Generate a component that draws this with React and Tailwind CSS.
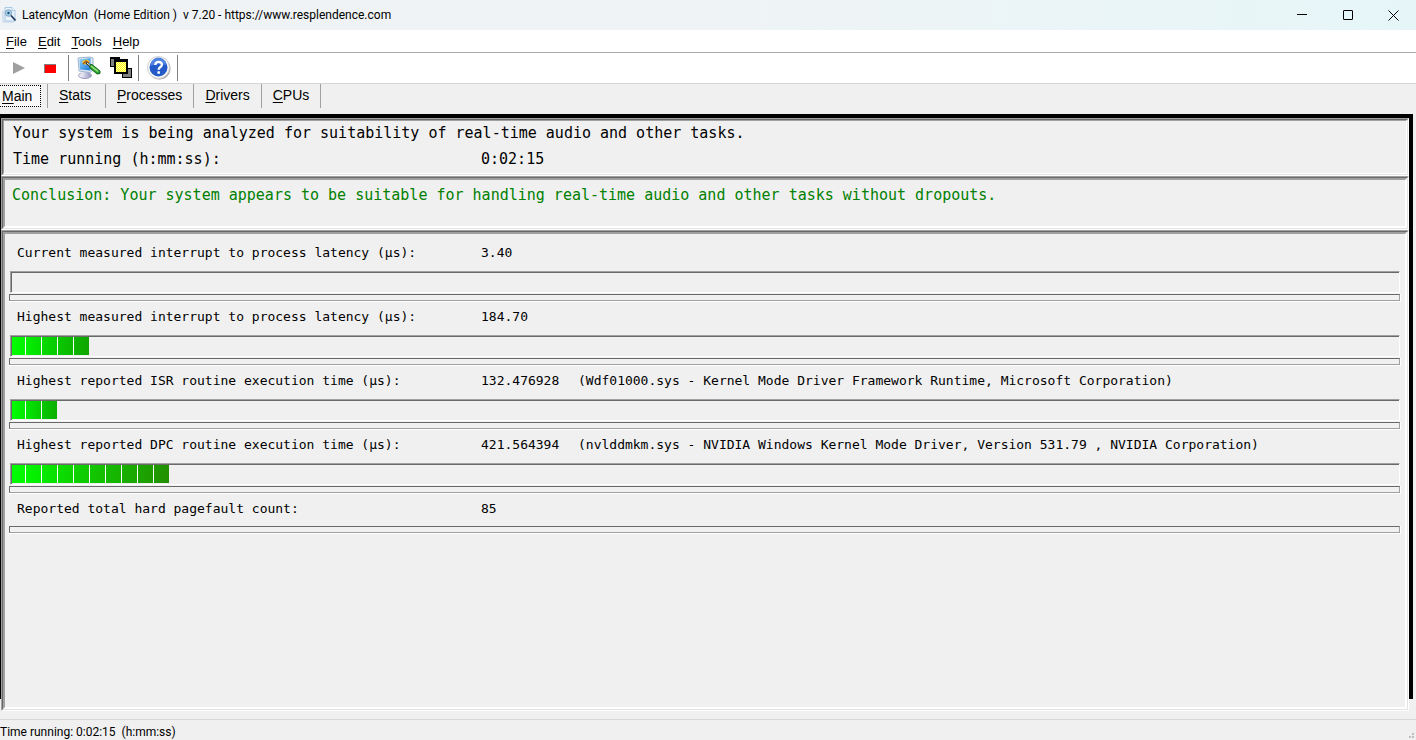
import React from "react";

const menus = ["File", "Edit", "Tools", "Help"];
const tabs = ["Main", "Stats", "Processes", "Drivers", "CPUs"];

const measurements = [
  {
    label: "Current measured interrupt to process latency (µs):",
    value: "3.40",
    segments: 0,
  },
  {
    label: "Highest measured interrupt to process latency (µs):",
    value: "184.70",
    segments: 5,
    endColor: "#10a400",
  },
  {
    label: "Highest reported ISR routine execution time (µs):",
    value: "132.476928",
    detail:
      "(Wdf01000.sys - Kernel Mode Driver Framework Runtime, Microsoft Corporation)",
    segments: 3,
    endColor: "#0aae00",
  },
  {
    label: "Highest reported DPC routine execution time (µs):",
    value: "421.564394",
    detail:
      "(nvlddmkm.sys - NVIDIA Windows Kernel Mode Driver, Version 531.79 , NVIDIA Corporation)",
    segments: 10,
    endColor: "#229000",
  },
];

// First letter is the keyboard accelerator
const Accel = ({ text }) => (
  <span>
    <span className="underline underline-offset-2">{text[0]}</span>
    {text.slice(1)}
  </span>
);

const AppIcon = () => (
  <svg width="15" height="16" viewBox="0 0 15 16">
    <path d="M3 .5h7l3 3V14H3z" fill="#e9f3fb" stroke="#a9c9e2" />
    <path d="M10 .5v3h3" fill="#fff" stroke="#a9c9e2" />
    <path d="M1 3.500V15h11" fill="none" stroke="#b8d3e8" />
    <circle cx="6.500" cy="6" r="3.300" fill="#9ed0ee" stroke="#8ea6bb" />
    <circle cx="6.500" cy="6" r="1.200" fill="#27516f" />
    <path d="m9 8.500 4.500 5" stroke="#233a63" strokeWidth="1.800" />
  </svg>
);

const PlayIcon = () => (
  <svg width="12" height="12" viewBox="0 0 12 12">
    <path d="M0 0v12L12 6z" fill="#a0a0a0" />
  </svg>
);

const StopIcon = () => (
  <svg width="12" height="9" viewBox="0 0 12 9">
    <path d="M0 0h12v9H0z" fill="#808080" />
    <path d="M1 1h11v8H1z" fill="#f00" />
  </svg>
);

const MonitorIcon = () => (
  <svg width="24" height="24" viewBox="0 0 24 24">
    <defs>
      <linearGradient id="screen" x1="0" y1="0" x2="1" y2="1">
        <stop offset="0" stopColor="#8fd4ff" />
        <stop offset="1" stopColor="#1877d8" />
      </linearGradient>
      <linearGradient id="base" x1="0" y1="0" x2="1" y2="0">
        <stop offset="0" stopColor="#f4f4fb" />
        <stop offset="1" stopColor="#9a9cc4" />
      </linearGradient>
    </defs>
    <ellipse cx="8" cy="19.500" rx="6.500" ry="3" fill="url(#base)" stroke="#9a9cbc" />
    <path d="m4 14 8 1 1 5-8 1z" fill="url(#base)" />
    <path d="m1 2 12-1 3 1v12l-3 2.500L2 15z" fill="#dce8f4" stroke="#9db4cf" />
    <path d="m2.500 3.500 11-1.500v12.500L3 13.500z" fill="url(#screen)" />
    <path d="m5 5 5-1.500 3 2L11 9 6 8z" fill="#f2c332" />
    <path d="m6 8 3-3 3 2" fill="none" stroke="#a35a18" strokeWidth="1.200" />
    <path d="m12 9 3-.5 8 6.500v2.500l-3 .500-7-6z" fill="#2f9e35" stroke="#146b1c" />
    <path d="m14 10 7 5.500" stroke="#9bea83" strokeWidth="1.500" />
    <path d="m9 6.500 4 3.500" stroke="#30343a" strokeWidth="2" />
    <path d="m10 7 3 2.500" stroke="#eceff2" />
  </svg>
);

const CascadeIcon = () => (
  <svg width="22" height="22" viewBox="0 0 22 22" shapeRendering="crispEdges">
    <defs>
      <pattern id="dither" width="2" height="2" patternUnits="userSpaceOnUse">
        <path d="M0 0h2v2H0z" fill="#ff0" />
        <path d="M0 0h1v1H0zM1 1h1v1H1z" fill="#fffbb0" />
      </pattern>
    </defs>
    <path d="M0 0h10v10H0zM12 11h10v10H12z" fill="#000" />
    <path d="M1 2h8v7H1zM13 12h8v8h-8z" fill="#808080" />
    <path d="M4 2h14v15H4z" fill="#000" />
    <path d="M6 5h10v10H6z" fill="url(#dither)" />
  </svg>
);

const HelpIcon = () => (
  <svg width="24" height="24" viewBox="0 0 24 24">
    <circle cx="12.500" cy="12.500" r="11" fill="#a5a5a5" />
    <circle cx="11.500" cy="11.500" r="11" fill="#f8f8f8" stroke="#cfcfcf" />
    <circle cx="11.500" cy="11.500" r="9" fill="#2459c8" />
    <path d="M3.500 10a8 8 0 0 1 16-1c-5-1-11-1-16 1z" fill="#4f83e2" />
    <path
      d="M8.300 9c0-4.200 6.600-4.200 6.600-.3 0 2.300-3.300 2.300-3.300 5"
      fill="none"
      stroke="#fff"
      strokeWidth="2.300"
    />
    <path d="M10.400 15.300h2.500v2.500h-2.500z" fill="#fff" />
  </svg>
);

const TitleBar = () => (
  <header className="flex h-[30px] items-center bg-linear-to-r from-[#f0f3f6] via-[#eff3f5] to-[#e6f6f8] pl-0.5 font-[Roboto,sans-serif] text-[12px]">
    <AppIcon />
    <h1 className="ml-[5px] whitespace-pre">
      {"LatencyMon  (Home Edition )  v 7.20 - https://www.resplendence.com"}
    </h1>
    <div className="ml-auto flex h-full">
      <button aria-label="Minimize" className="grid w-[45px] place-items-center">
        <svg width="11" height="11" viewBox="0 0 11 11">
          <path d="M0 4.500h10" stroke="#000" />
        </svg>
      </button>
      <button aria-label="Maximize" className="grid w-[46px] place-items-center">
        <svg width="11" height="11" viewBox="0 0 11 11">
          <rect x=".5" y=".5" width="9" height="9" rx=".5" fill="none" stroke="#000" />
        </svg>
      </button>
      <button aria-label="Close" className="grid w-[45px] place-items-center">
        <svg width="11" height="11" viewBox="0 0 11 11">
          <path d="m.5.5 10 10m0-10-10 10" stroke="#000" />
        </svg>
      </button>
    </div>
  </header>
);

const MenuBar = () => (
  <nav className="flex h-[23px] items-center gap-[11px] border-b border-[#a9a9a9] bg-white pt-0.5 pl-1.5 text-[13px]">
    {menus.map((menu) => (
      <button key={menu}>
        <Accel text={menu} />
      </button>
    ))}
  </nav>
);

const Divider = () => <div className="h-[26px] w-px bg-[#808080]" />;

const Toolbar = () => (
  <div className="flex h-[31px] items-center border-b border-[#d6d6d6] bg-white pl-[13px]">
    <button aria-label="Start monitor">
      <PlayIcon />
    </button>
    <button aria-label="Stop monitor" className="mr-3 ml-[19px]">
      <StopIcon />
    </button>
    <Divider />
    <div className="flex items-center gap-[9px] pr-1.5 pl-2">
      <button aria-label="Options">
        <MonitorIcon />
      </button>
      <button aria-label="Windows">
        <CascadeIcon />
      </button>
    </div>
    <Divider />
    <button aria-label="Help" className="mr-1.5 ml-2">
      <HelpIcon />
    </button>
    <Divider />
  </div>
);

const TabBar = () => (
  <div role="tablist" className="flex h-[30px] items-start text-[14px]">
    {tabs.map((tab, i) =>
      i === 0 ? (
        <div key={tab} className="h-6 w-12 border-r border-[#a0a0a0]">
          <button
            role="tab"
            aria-selected="true"
            className="mt-px h-[22px] w-[41px] border border-l-0 border-dotted border-black bg-[#f8f8f8] pl-0.5 text-left leading-5"
          >
            <Accel text={tab} />
          </button>
        </div>
      ) : (
        <button
          key={tab}
          role="tab"
          aria-selected="false"
          className="h-6 min-w-[58px] border-r border-[#a0a0a0] px-[11px] pb-0.5 text-left"
        >
          <Accel text={tab} />
        </button>
      )
    )}
  </div>
);

// Three nested edges give the sunken Win32 frame
const Panel = ({ thick, className = "", children }) => (
  <section
    className={`flex flex-col border border-t-[#a0a0a0] border-r-white border-b-white border-l-[#a0a0a0] bg-[#f0f0f0] ${className}`}
  >
    <div className="flex grow flex-col border border-t-[#696969] border-r-[#e3e3e3] border-b-[#e3e3e3] border-l-[#696969]">
      <div
        className={`grow border-t-[#a0a0a0] border-r-white border-b-white border-l-[#a0a0a0] ${
          thick ? "border-2" : "border"
        }`}
      >
        {children}
      </div>
    </div>
  </section>
);

const Separator = () => (
  <div className="border-r border-b border-white">
    <div className="h-[7px] border border-t-[#696969] border-r-[#a0a0a0] border-b-[#a0a0a0] border-l-[#696969]" />
  </div>
);

const Bar = ({ segments, endColor }) => (
  <div className="mx-px mt-[5px] mb-px border border-t-[#a0a0a0] border-r-white border-b-white border-l-[#a0a0a0]">
    <div className="h-5 border-t border-l border-[#696969]">
      {segments > 0 && (
        <div
          className="flex h-[18px] w-fit"
          style={{ background: `linear-gradient(to right, #00ff00, ${endColor})` }}
        >
          {Array.from({ length: segments }, (_, i) => (
            <div
              key={i}
              className="w-4 border-r border-white first:w-3.5 last:w-[15px] last:border-r-0"
            />
          ))}
        </div>
      )}
    </div>
  </div>
);

const Row = ({ label, value, detail }) => (
  <div className="grid h-7 grid-cols-[464px_97px_1fr] items-center pt-0.5 pl-2 text-[13px] whitespace-nowrap">
    <span>{label}</span>
    <span>{value}</span>
    <span>{detail}</span>
  </div>
);

const App = () => {
  return (
    <div className="flex min-h-screen flex-col bg-[#f0f0f0] font-['Liberation_Sans',Arial,sans-serif] text-black">
      <TitleBar />
      <MenuBar />
      <Toolbar />
      <TabBar />

      <main className="relative mr-[3px] mb-2 flex grow flex-col pt-1 pr-1 pl-px font-['DejaVu_Sans_Mono',monospace]">
        {/* Black backing stops short of the panels */}
        <div className="absolute inset-x-0 top-0 bottom-3 bg-black" />
        <div className="relative flex grow flex-col">
          <Panel>
            <div className="space-y-0.5 pb-0.5 pl-[9px] text-[15px] leading-6">
              <p>
                Your system is being analyzed for suitability of real-time audio
                and other tasks.
              </p>
              <div className="grid grid-cols-[468px_1fr]">
                <span>Time running (h:mm:ss):</span>
                <span>0:02:15</span>
              </div>
            </div>
          </Panel>

          <Panel thick>
            <p className="min-h-[46px] pt-[3px] pl-[7px] text-[15px] leading-6 text-[#008000]">
              Conclusion: Your system appears to be suitable for handling
              real-time audio and other tasks without dropouts.
            </p>
          </Panel>

          <Panel thick className="grow">
            <div className="px-1 pt-1">
              {measurements.map((item) => (
                <div key={item.label}>
                  <Row {...item} />
                  <Bar segments={item.segments} endColor={item.endColor} />
                  <Separator />
                </div>
              ))}
              <div className="space-y-1">
                <Row label="Reported total hard pagefault count:" value="85" />
                <Separator />
              </div>
            </div>
          </Panel>
        </div>
      </main>

      <footer className="flex h-[21px] items-end justify-between border-t border-[#d7d7d7] font-[Roboto,sans-serif] text-[12px]">
        <span className="leading-[15px] whitespace-pre">
          {"Time running: 0:02:15  (h:mm:ss)"}
        </span>
        <svg width="8" height="8" viewBox="0 0 8 8">
          <path d="M4 1h2v2H4zM1 4h2v2H1zM4 4h2v2H4z" fill="#bfbfbf" />
        </svg>
      </footer>
    </div>
  );
};

export default App;
